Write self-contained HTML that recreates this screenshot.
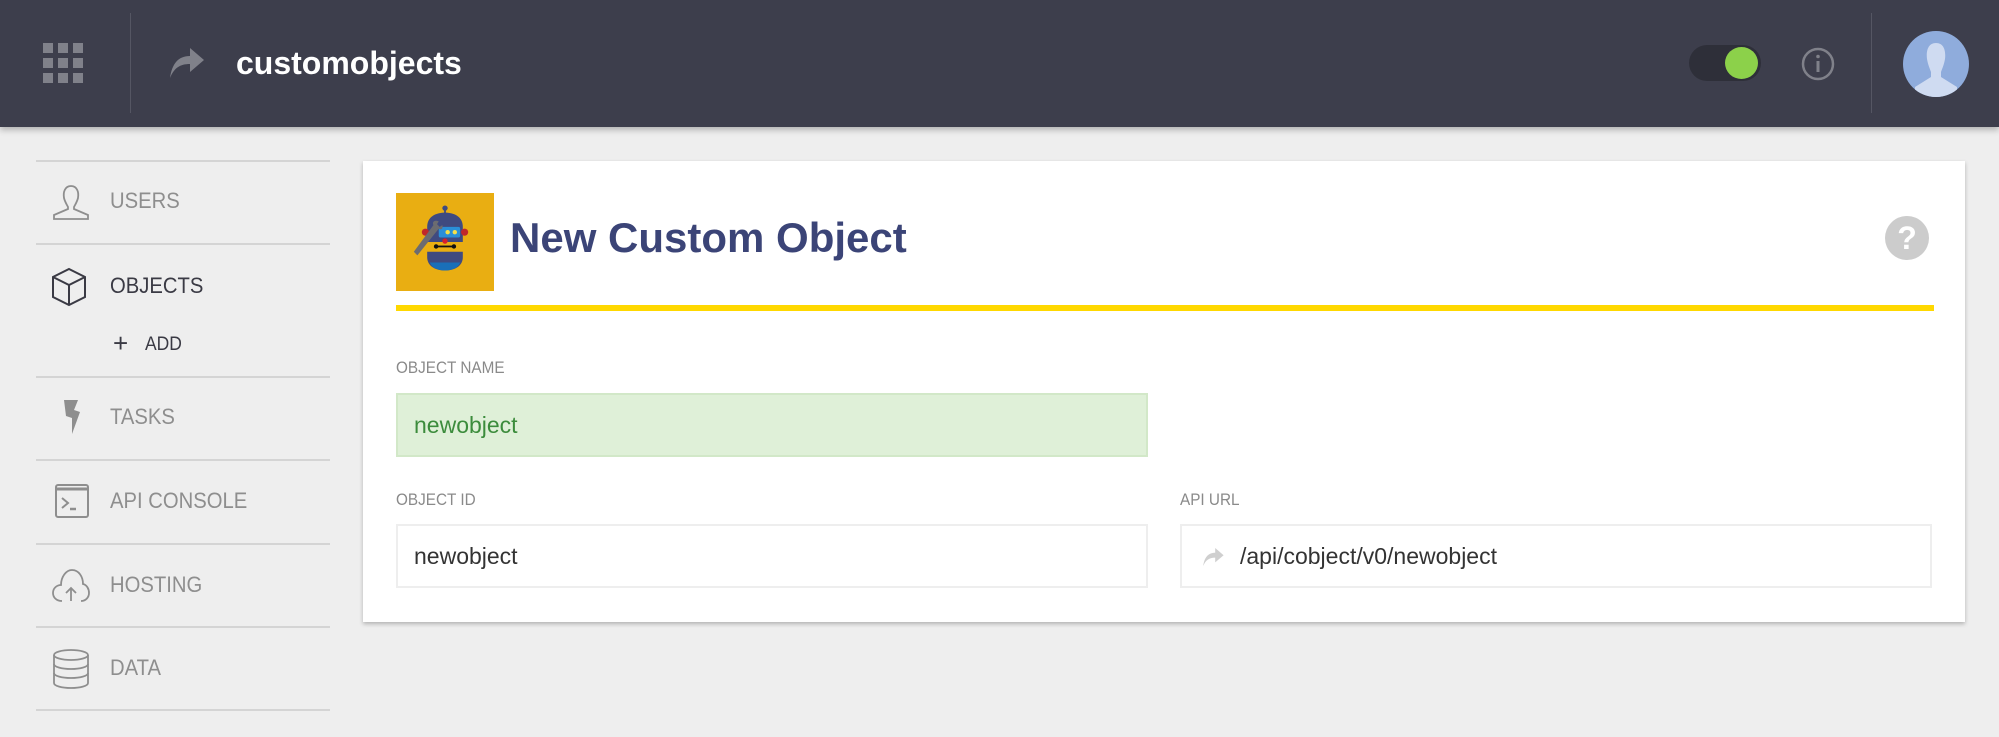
<!DOCTYPE html>
<html><head><meta charset="utf-8"><style>
*{margin:0;padding:0;box-sizing:border-box}
body{width:1999px;height:737px;background:#eeeeee;font-family:"Liberation Sans",sans-serif;position:relative;overflow:hidden}
.hdr{position:absolute;left:0;top:0;width:1999px;height:127px;background:#3d3e4c;box-shadow:0 3px 6px rgba(0,0,0,.25)}
.abs{position:absolute}
.side-line{position:absolute;left:36px;width:294px;height:2px;background:#d4d4d4}
.nav{position:absolute;left:110px;font-size:22px;color:#8e8e8e;transform:scaleX(.92);transform-origin:left center;line-height:24px}
.card{position:absolute;left:363px;top:161px;width:1602px;height:461px;background:#fff;box-shadow:0 2px 4px rgba(0,0,0,.25)}
.lbl{position:absolute;font-size:17px;color:#8a8a8a;transform:scaleX(.9);transform-origin:left;}
.inp{position:absolute;height:64px;border:2px solid #eeeeee;background:#fff;font-size:23px;color:#333;line-height:60px;padding-left:16px}
</style></head><body>
<div class="hdr">
  <svg class="abs" style="left:43px;top:43px" width="42" height="42" viewBox="0 0 42 42" fill="#80818a">
    <rect x="0" y="0" width="10" height="10"/><rect x="15" y="0" width="10" height="10"/><rect x="30" y="0" width="10" height="10"/>
    <rect x="0" y="15" width="10" height="10"/><rect x="15" y="15" width="10" height="10"/><rect x="30" y="15" width="10" height="10"/>
    <rect x="0" y="30" width="10" height="10"/><rect x="15" y="30" width="10" height="10"/><rect x="30" y="30" width="10" height="10"/>
  </svg>
  <div class="abs" style="left:130px;top:13px;width:1px;height:100px;background:#555663"></div>
  <svg class="abs" style="left:170px;top:48px" width="36" height="30" viewBox="0 0 36 30"><path d="M20 0 L34 12 L20 24 L20 16 C10 16 4 20 0 30 C2 16 8 8 20 8 Z" fill="#80818a"/></svg>
  <div class="abs" style="left:236px;top:45px;font-size:32px;font-weight:bold;color:#fff">customobjects</div>
  <div class="abs" style="left:1689px;top:45px;width:72px;height:36px;border-radius:18px;background:#2e2f39"></div>
  <div class="abs" style="left:1725px;top:47px;width:33px;height:32px;border-radius:50%;background:#8cd14a"></div>
  <svg class="abs" style="left:1801px;top:47px" width="34" height="34" viewBox="0 0 34 34"><circle cx="17" cy="17" r="15" fill="none" stroke="#80818a" stroke-width="2.5"/><rect x="15.5" y="14" width="3" height="11" fill="#80818a"/><circle cx="17" cy="9.5" r="1.8" fill="#80818a"/></svg>
  <div class="abs" style="left:1871px;top:13px;width:1px;height:100px;background:#555663"></div>
  <svg class="abs" style="left:1903px;top:31px" width="66" height="66" viewBox="0 0 66 66"><clipPath id="c"><circle cx="33" cy="33" r="33"/></clipPath><g clip-path="url(#c)"><rect width="66" height="66" fill="#8facdc"/><path d="M33 12 C25 12 23 20 24 28 C25 34 27 38 28 41 L28 46 L12 56 L12 70 L54 70 L54 56 L38 46 L38 41 C39 38 41 34 42 28 C43 20 41 12 33 12 Z" fill="#cfdbf1"/></g></svg>
</div>

<div class="side-line" style="top:160px"></div>
<div class="side-line" style="top:243px"></div>
<div class="side-line" style="top:376px"></div>
<div class="side-line" style="top:459px"></div>
<div class="side-line" style="top:543px"></div>
<div class="side-line" style="top:626px"></div>
<div class="side-line" style="top:709px"></div>

<svg class="abs" style="left:52px;top:184px" width="38" height="36" viewBox="0 0 38 36" fill="none" stroke="#8e8e8e" stroke-width="1.8"><path d="M19 2 C13 2 11 8 12 14 C13 18 15 21 16 23 L16 25 L2 31 L2 35 L36 35 L36 31 L22 25 L22 23 C23 21 25 18 26 14 C27 8 25 2 19 2 Z"/></svg>
<div class="nav" style="top:189px">USERS</div>

<svg class="abs" style="left:51px;top:267px" width="36" height="40" viewBox="0 0 36 40" fill="none" stroke="#3a3a44" stroke-width="2"><path d="M18 2 L34 10 L34 30 L18 38 L2 30 L2 10 Z M2 10 L18 18 L34 10 M18 18 L18 38"/></svg>
<div class="nav" style="top:274px;color:#3a3a44">OBJECTS</div>
<div class="abs" style="left:113px;top:330px;font-size:26px;color:#3a3a44;line-height:26px">+</div>
<div class="nav" style="left:145px;top:333px;color:#3a3a44;font-size:19px">ADD</div>

<svg class="abs" style="left:62px;top:400px" width="20" height="34" viewBox="0 0 20 34" fill="#8e8e8e"><path d="M2 0 L16 0 L12 10 L18 12 L10 34 L10 18 L4 16 Z"/></svg>
<div class="nav" style="top:405px">TASKS</div>

<svg class="abs" style="left:55px;top:484px" width="34" height="34" viewBox="0 0 34 34" fill="none" stroke="#8e8e8e" stroke-width="2"><rect x="1" y="1" width="32" height="32" rx="2"/><line x1="1" y1="5" x2="33" y2="5" stroke-width="3"/><path d="M7 14 L13 19 L7 24"/><line x1="15" y1="25" x2="21" y2="25" stroke-width="2.5"/></svg>
<div class="nav" style="top:489px">API CONSOLE</div>

<svg class="abs" style="left:52px;top:567px" width="38" height="36" viewBox="0 0 38 36" fill="none" stroke="#8e8e8e" stroke-width="1.8"><path d="M10 34 C4 34 1 30 1 26 C1 21 5 18 9 18 C9 10 14 3 20 3 C27 3 31 10 31 17 C35 18 37 22 37 26 C37 30 34 34 29 34"/><path d="M19 34 L19 22 M14 26 L19 21 L24 26"/></svg>
<div class="nav" style="top:573px">HOSTING</div>

<svg class="abs" style="left:52px;top:649px" width="38" height="40" viewBox="0 0 38 40" fill="none" stroke="#8e8e8e" stroke-width="1.8"><ellipse cx="19" cy="6" rx="17" ry="5"/><path d="M2 6 L2 34 C2 37 10 39 19 39 C28 39 36 37 36 34 L36 6"/><path d="M2 15 C2 18 10 20 19 20 C28 20 36 18 36 15 M2 24 C2 27 10 29 19 29 C28 29 36 27 36 24"/></svg>
<div class="nav" style="top:656px">DATA</div>

<div class="card"></div>
<svg class="abs" style="left:396px;top:193px" width="98" height="98" viewBox="0 0 110 110">
  <rect width="110" height="110" fill="#e9ae12"/>
  <circle cx="55" cy="17" r="3" fill="#3f4a80"/><rect x="54" y="18" width="2" height="6" fill="#3f4a80"/>
  <path d="M35 55 L35 38 C35 27 44 22 55 22 C66 22 75 27 75 38 L75 55 Z" fill="#3f4a80"/>
  <circle cx="33" cy="44" r="4" fill="#c0282a"/><circle cx="77" cy="44" r="4" fill="#c0282a"/>
  <rect x="48" y="38" width="24" height="12" rx="2" fill="#2a8fd8"/>
  <circle cx="58" cy="44" r="2.5" fill="#f5e04a"/><circle cx="66" cy="44" r="2.5" fill="#f5e04a"/>
  <circle cx="55" cy="54" r="3" fill="#d8202a"/>
  <path d="M35 66 L75 66 L75 72 C75 82 66 87 55 87 C44 87 35 82 35 72 Z" fill="#3f4a80"/>
  <path d="M38 78 L72 78 C70 84 63 87 55 87 C47 87 40 84 38 78 Z" fill="#1a6fb8"/>
  <rect x="45" y="59" width="20" height="2" fill="#111"/><circle cx="45" cy="60" r="2.5" fill="#111"/><circle cx="65" cy="60" r="2.5" fill="#111"/>
  <path d="M48 40 L24 70 L20 66 L42 36 C40 32 44 30 48 32 L46 35 L49 38 L52 36 C53 40 51 42 48 40 Z" fill="#6c6c70"/>
</svg>
<div class="abs" style="left:510px;top:214px;font-size:42px;font-weight:bold;color:#3b4477">New Custom Object</div>
<svg class="abs" style="left:1885px;top:216px" width="44" height="44" viewBox="0 0 44 44"><circle cx="22" cy="22" r="22" fill="#cccccc"/><text x="22" y="33" text-anchor="middle" font-family="Liberation Sans" font-weight="bold" font-size="32" fill="#fff">?</text></svg>
<div class="abs" style="left:396px;top:305px;width:1538px;height:6px;background:#ffd800"></div>

<div class="lbl" style="left:396px;top:358px">OBJECT NAME</div>
<div class="inp" style="left:396px;top:393px;width:752px;background:#dff0d8;border-color:#d2e8c8;color:#3c8c3c">newobject</div>
<div class="lbl" style="left:396px;top:490px">OBJECT ID</div>
<div class="inp" style="left:396px;top:524px;width:752px">newobject</div>
<div class="lbl" style="left:1180px;top:490px">API URL</div>
<div class="inp" style="left:1180px;top:524px;width:752px;padding-left:58px">/api/cobject/v0/newobject</div>
<svg class="abs" style="left:1202px;top:548px" width="24" height="18" viewBox="0 0 36 30"><path d="M20 0 L34 12 L20 24 L20 16 C10 16 4 20 0 30 C2 16 8 8 20 8 Z" fill="#cfcfcf"/></svg>
</body></html>
